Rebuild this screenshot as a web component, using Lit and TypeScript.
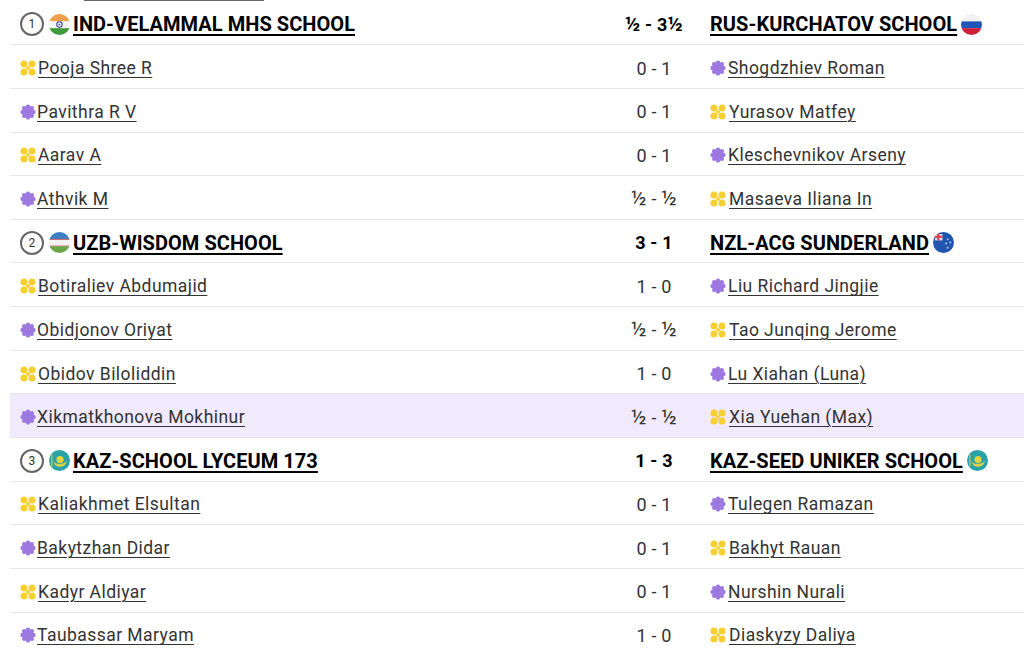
import { LitElement, html, css, svg } from "lit";
import { customElement } from "lit/decorators.js";

type Flag = "ind" | "rus" | "uzb" | "nzl" | "kaz";
interface Player { c: "y" | "p"; left: string; score: string; rc: "y" | "p"; right: string; hi?: boolean }
interface Match { n: number; lf: Flag; left: string; score: string; right: string; rf: Flag; players: Player[] }

const P = (c: "y" | "p", left: string, score: string, right: string, hi = false): Player => ({
  c, left, score, rc: c === "y" ? "p" : "y", right, hi,
});

const MATCHES: Match[] = [
  { n: 1, lf: "ind", left: "IND-VELAMMAL MHS SCHOOL", score: "½ - 3½", right: "RUS-KURCHATOV SCHOOL", rf: "rus", players: [
    P("y", "Pooja Shree R", "0 - 1", "Shogdzhiev Roman"),
    P("p", "Pavithra R V", "0 - 1", "Yurasov Matfey"),
    P("y", "Aarav A", "0 - 1", "Kleschevnikov Arseny"),
    P("p", "Athvik M", "½ - ½", "Masaeva Iliana In"),
  ]},
  { n: 2, lf: "uzb", left: "UZB-WISDOM SCHOOL", score: "3 - 1", right: "NZL-ACG SUNDERLAND", rf: "nzl", players: [
    P("y", "Botiraliev Abdumajid", "1 - 0", "Liu Richard Jingjie"),
    P("p", "Obidjonov Oriyat", "½ - ½", "Tao Junqing Jerome"),
    P("y", "Obidov Biloliddin", "1 - 0", "Lu Xiahan (Luna)"),
    P("p", "Xikmatkhonova Mokhinur", "½ - ½", "Xia Yuehan (Max)", true),
  ]},
  { n: 3, lf: "kaz", left: "KAZ-SCHOOL LYCEUM 173", score: "1 - 3", right: "KAZ-SEED UNIKER SCHOOL", rf: "kaz", players: [
    P("y", "Kaliakhmet Elsultan", "0 - 1", "Tulegen Ramazan"),
    P("p", "Bakytzhan Didar", "0 - 1", "Bakhyt Rauan"),
    P("y", "Kadyr Aldiyar", "0 - 1", "Nurshin Nurali"),
    P("p", "Taubassar Maryam", "1 - 0", "Diaskyzy Daliya"),
  ]},
];

const flagBody: Record<Flag, unknown> = {
  ind: svg`<rect width="20" height="7" fill="#f0a04b"/><rect y="7" width="20" height="6.5" fill="#f4f4f4"/><rect y="13.5" width="20" height="6.5" fill="#3f9a3a"/><circle cx="10" cy="10" r="2.6" fill="none" stroke="#34408c" stroke-width="1"/><circle cx="10" cy="10" r=".8" fill="#34408c"/>`,
  rus: svg`<rect width="20" height="7" fill="#f2f2f4"/><rect y="7" width="20" height="6.5" fill="#1f55b8"/><rect y="13.5" width="20" height="6.5" fill="#cf1f38"/>`,
  uzb: svg`<rect width="20" height="7" fill="#3f7fc4"/><rect y="7" width="20" height="6.5" fill="#f2f2f2"/><rect y="6.6" width="20" height=".8" fill="#c8484f"/><rect y="13" width="20" height=".8" fill="#c8484f"/><rect y="13.6" width="20" height="6.4" fill="#6aa548"/>`,
  nzl: svg`<rect width="20" height="20" fill="#2056b0"/><rect x="2" y="2" width="7" height="6" fill="#e8e4ee"/><path d="M5 1v7M1 4.5h8" stroke="#d83a4a" stroke-width="2"/><circle cx="14" cy="7" r=".9" fill="#c4c8e4"/><circle cx="16.5" cy="10" r=".9" fill="#c4c8e4"/><circle cx="12.5" cy="11" r=".9" fill="#c4c8e4"/><circle cx="14" cy="15" r=".9" fill="#c4c8e4"/>`,
  kaz: svg`<rect width="20" height="20" fill="#2aa3a8"/><circle cx="10.5" cy="9" r="3.4" fill="#e4d43c"/><path d="M4 10.5c2 3.6 9.500 3.600 13 0-1 4-3.500 5.500-6.500 5.500s-5.500-1.500-6.500-5.500z" fill="#d8d24a"/><rect x="2" y="4" width="1.4" height="12" fill="#a9c45a"/>`,
};

let uid = 0;
const flag = (f: Flag) => {
  const id = `fc${uid++}`;
  return html`<svg class="flag" viewBox="0 0 20 20" width="21" height="21" aria-hidden="true">
    <defs><clipPath id=${id}><circle cx="10" cy="10" r="10"/></clipPath></defs>
    <g clip-path="url(#${id})">${flagBody[f]}</g></svg>`;
};

const yellowIcon = html`<svg class="ico y" viewBox="0 0 16 16" width="16" height="16" aria-hidden="true" fill="#f6cf30">
  <circle cx="4" cy="4" r="3.5"/><circle cx="12" cy="4" r="3.5"/><circle cx="4" cy="12" r="3.5"/><circle cx="12" cy="12" r="3.5"/><rect x="6.3" y="6.3" width="3.4" height="3.4"/></svg>`;

const purpleIcon = html`<svg class="ico p" viewBox="0 0 16 16" width="16" height="16" aria-hidden="true" fill="#9c78e0">
  <circle cx="8" cy="8" r="4.8"/>
  <circle cx="8" cy="2.6" r="2.2"/><circle cx="8" cy="13.4" r="2.2"/><circle cx="2.6" cy="8" r="2.2"/><circle cx="13.4" cy="8" r="2.2"/>
  <circle cx="4.2" cy="4.2" r="2.2"/><circle cx="11.8" cy="4.2" r="2.2"/><circle cx="4.2" cy="11.8" r="2.2"/><circle cx="11.8" cy="11.8" r="2.2"/></svg>`;

const ico = (c: "y" | "p") => (c === "y" ? yellowIcon : purpleIcon);

/** Roboto's ½ glyph is narrower than the reference font's, so it is set a little larger. */
const scoreText = (s: string) =>
  s.split(/(½)/).map((part) => (part === "½" ? html`<span class="frac">½</span>` : part));

@customElement("app-root")
export class AppRoot extends LitElement {
  static styles = css`
    :host {
      display: block;
      width: 1024px;
      height: 653px;
      overflow: hidden;
      background: #fff;
      font-family: Roboto, "Liberation Sans", sans-serif;
      color: #333;
    }
    .sliver { height: 1px; width: 180px; margin-left: 84px; margin-bottom: 0.6px; background: #666; }
    .table { margin-left: 10px; display: flex; flex-direction: column; }
    .row {
      display: grid;
      grid-template-columns: 594px 100px 1fr;
      align-items: center;
      height: 43.65px;
      padding-top: 3px;
      box-sizing: border-box;
      border-bottom: 1px solid #e6e6e6;
      font-size: 17.5px;
      letter-spacing: 0.45px;
    }
    .row.hi { background: #f0eafc; }
    .row.team { font-weight: 700; font-size: 20px; color: #000; letter-spacing: 0.05px; }
    .cell { display: flex; align-items: center; min-width: 0; }
    .left.player { padding-left: 10px; gap: 1px; }
    .left.team { padding-left: 10px; gap: 3px; }
    .right { padding-left: 6px; }
    .right.player { gap: 2px; }
    .right.team { gap: 4px; }
    .ico.y { margin-right: 1px; }
    .score { text-align: center; font-size: 18px; color: #333; letter-spacing: 0.2px; }
    .row.team .score { font-size: 18px; color: #000; letter-spacing: 0.2px; }
    .frac { font-size: 20px; line-height: 1; }
    a {
      color: inherit;
      text-decoration: underline;
      text-decoration-thickness: 1px;
      text-underline-offset: 3px;
      white-space: nowrap;
    }
    .row.team a { text-decoration-thickness: 2px; text-underline-offset: 3px; }
    .num {
      width: 24px; height: 24px; box-sizing: border-box;
      border: 2px solid #666; border-radius: 50%;
      display: flex; align-items: center; justify-content: center;
      font-size: 12px; font-weight: 400; color: #333;
      margin-right: 2px;
    }
    .ico, .flag { flex: none; display: block; }
  `;

  render() {
    return html`<div class="sliver"></div>
      <div class="table">
        ${MATCHES.map((m) => html`
          <div class="row team">
            <div class="cell left team"><span class="num">${m.n}</span>${flag(m.lf)}<a href="#">${m.left}</a></div>
            <div class="score">${scoreText(m.score)}</div>
            <div class="cell right team"><a href="#">${m.right}</a>${flag(m.rf)}</div>
          </div>
          ${m.players.map((p) => html`
            <div class="row ${p.hi ? "hi" : ""}">
              <div class="cell left player">${ico(p.c)}<a href="#">${p.left}</a></div>
              <div class="score">${scoreText(p.score)}</div>
              <div class="cell right player">${ico(p.rc)}<a href="#">${p.right}</a></div>
            </div>`)}
        `)}
      </div>`;
  }
}
